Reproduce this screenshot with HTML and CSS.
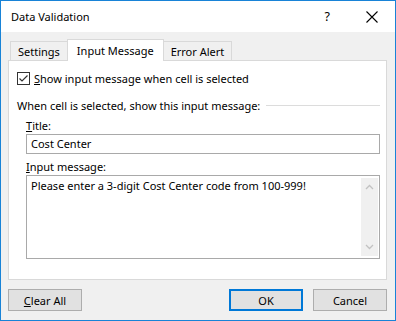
FILE: index.html
```html
<!DOCTYPE html>
<html>
<head>
	<title>Data Validation</title>
	<link rel="stylesheet" href="styles.css">
</head>
<body>
	<div class="window">
		<div class="titlebar">
			<span class="title">Data Validation</span>
			<span class="help">?</span>
			<svg class="close" width="12" height="12" viewBox="0 0 12 12">
				<path d="M0.5 0.5 L11.5 11.5 M11.5 0.5 L0.5 11.5" stroke="#000" stroke-width="1.1" fill="none"/>
			</svg>
		</div>
		<div class="tabs">
			<div class="tab">Settings</div>
			<div class="tab active">Input Message</div>
			<div class="tab">Error Alert</div>
		</div>
		<div class="panel">
			<div class="check-row">
				<span class="checkbox">
					<svg width="11" height="11" viewBox="0 0 11 11">
						<path d="M1.5 5.5 L4 8 L9.5 2.5" stroke="#333" stroke-width="1.2" fill="none"/>
					</svg>
				</span>
				<span><u>S</u>how input message when cell is selected</span>
			</div>
			<div class="group">
				<span>When cell is selected, show this input message:</span>
				<span class="rule"></span>
			</div>
			<div class="field">
				<label><u>T</u>itle:</label>
				<div class="textbox">Cost Center</div>
			</div>
			<div class="field">
				<label><u>I</u>nput message:</label>
				<div class="textarea">
					<span class="msg">Please enter a 3-digit Cost Center code from 100-999!</span>
					<div class="scrollbar">
						<svg width="9" height="6" viewBox="0 0 9 6"><path d="M1 5 L4.5 1.5 L8 5" stroke="#c2c2c2" stroke-width="1.3" fill="none"/></svg>
						<svg width="9" height="6" viewBox="0 0 9 6"><path d="M1 1 L4.5 4.5 L8 1" stroke="#c2c2c2" stroke-width="1.3" fill="none"/></svg>
					</div>
				</div>
			</div>
		</div>
		<div class="buttons">
			<button class="btn"><u>C</u>lear All</button>
			<span class="spacer"></span>
			<button class="btn default">OK</button>
			<button class="btn">Cancel</button>
		</div>
	</div>
</body>
</html>
```

FILE: styles.css
```css
body {
	margin: 0;
	padding: 0;
	background-color: #fff;
	font-family: "Noto Sans", "DejaVu Sans", sans-serif;
	font-size: 11px;
	color: #000;
}

.window {
	width: 396px;
	height: 321px;
	box-sizing: border-box;
	border: 1px solid #1883d7;
	background-color: #f0f0f0;
	display: flex;
	flex-direction: column;
}

.titlebar {
	height: 31px;
	background-color: #fff;
	display: flex;
	align-items: center;
	padding-left: 10px;
}

.title {
	flex: 1;
	font-size: 11px;
}

.help {
	font-size: 12.5px;
	margin-right: 36px;
}

.close {
	margin-right: 17px;
}

.tabs {
	display: flex;
	margin: 7px 0 0 9px;
	height: 21px;
	position: relative;
	z-index: 1;
}

.tab {
	box-sizing: border-box;
	height: 19px;
	margin-top: 2px;
	border: 1px solid #d9d9d9;
	border-bottom: none;
	padding: 0 7px;
	display: flex;
	align-items: center;
	background-color: #f0f0f0;
}

.tab + .tab {
	margin-left: -1px;
}

.tab.active {
	height: 22px;
	margin-top: 0;
	background-color: #fff;
	padding: 0 9px;
}

.panel {
	box-sizing: border-box;
	height: 220px;
	margin: 0 8px 0 7px;
	border: 1px solid #d9d9d9;
	background-color: #fff;
	padding: 10px 6px 0 8px;
}

.check-row {
	display: flex;
	align-items: center;
	height: 15px;
}

.checkbox {
	box-sizing: border-box;
	width: 13px;
	height: 13px;
	border: 1px solid #333;
	display: flex;
	align-items: center;
	justify-content: center;
	margin-right: 4px;
}

.group {
	display: flex;
	align-items: center;
	margin-top: 11px;
	height: 16px;
}

.rule {
	flex: 1;
	height: 1px;
	background-color: #dcdcdc;
	margin-left: 6px;
}

.field {
	margin-left: 9px;
	margin-top: 4px;
}

.field label {
	display: block;
	height: 17px;
	line-height: 17px;
}

.textbox {
	box-sizing: border-box;
	height: 20px;
	border: 1px solid #a9a9a9;
	padding-left: 4px;
	line-height: 18px;
}

.textarea {
	box-sizing: border-box;
	height: 84px;
	border: 1px solid #a9a9a9;
	display: flex;
	padding: 2px 1px 2px 4px;
}

.msg {
	flex: 1;
	line-height: 16px;
}

.scrollbar {
	width: 17px;
	background-color: #f0f0f0;
	display: flex;
	flex-direction: column;
	justify-content: space-between;
	align-items: center;
	padding: 6px 0;
}

.buttons {
	display: flex;
	margin: 9px 8px 0 7px;
}

.spacer {
	flex: 1;
}

.btn {
	box-sizing: border-box;
	width: 74px;
	height: 22px;
	background-color: #e1e1e1;
	border: 1px solid #adadad;
	font-family: "Noto Sans", "DejaVu Sans", sans-serif;
	font-size: 11px;
	color: #000;
	padding: 0;
}

.btn.default {
	border: 2px solid #0078d7;
	margin-right: 10px;
}
```
